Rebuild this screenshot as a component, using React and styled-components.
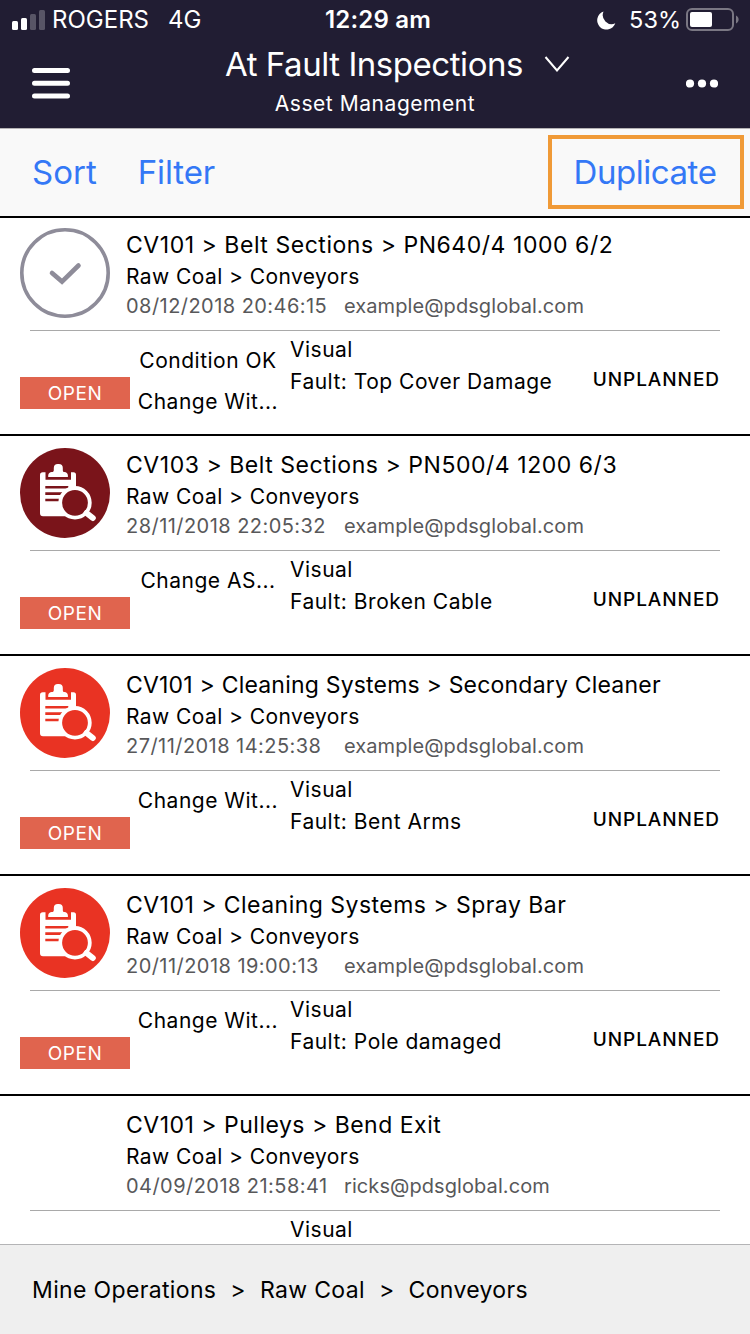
import React from "react";
import styled, { createGlobalStyle } from "styled-components";

const inspections = [
  {
    icon: "check",
    asset: "CV101 > Belt Sections > PN640/4 1000 6/2",
    date: "08/12/2018 20:46:15",
    email: "example@pdsglobal.com",
    actions: ["Condition OK", "Change Wit..."],
    fault: "Top Cover Damage",
  },
  {
    icon: "inspect",
    color: "#7a141a",
    asset: "CV103 > Belt Sections > PN500/4 1200 6/3",
    date: "28/11/2018 22:05:32",
    email: "example@pdsglobal.com",
    actions: ["Change AS..."],
    fault: "Broken Cable",
  },
  {
    icon: "inspect",
    color: "#e93323",
    asset: "CV101 > Cleaning Systems > Secondary Cleaner",
    tracking: "0.2px",
    date: "27/11/2018 14:25:38",
    email: "example@pdsglobal.com",
    actions: ["Change Wit..."],
    fault: "Bent Arms",
  },
  {
    icon: "inspect",
    color: "#e93323",
    asset: "CV101 > Cleaning Systems > Spray Bar",
    tracking: "0.47px",
    date: "20/11/2018 19:00:13",
    email: "example@pdsglobal.com",
    actions: ["Change Wit..."],
    fault: "Pole damaged",
  },
  {
    asset: "CV101 > Pulleys > Bend Exit",
    tracking: "0.5px",
    date: "04/09/2018 21:58:41",
    email: "ricks@pdsglobal.com",
    actions: [],
  },
];

const CheckIcon = () => (
  <svg width="90" height="90" viewBox="0 0 90 90" fill="none" stroke="#8e8c99">
    <circle cx="45" cy="45" r="43.2" strokeWidth="3.6" />
    <path d="M32 45l10 8.600L58.500 37.500" strokeWidth="4.600" strokeLinecap="round" />
  </svg>
);

const InspectIcon = ({ color }) => (
  <svg width="90" height="90" viewBox="0 0 90 90">
    <circle cx="45" cy="45" r="45" fill={color} />
    <path
      d="M22.800 24.200H25.500v7.600h25.500v-7.600h2.500a2.500 2.500 0 0 1 2.500 2.500V68.300H23a3 3 0 0 1-3-3V27a2.800 2.800 0 0 1 2.800-2.800z"
      fill="#fff"
    />
    <path
      d="M28.200 28.900v-1.500c0-2 1.800-3 3.500-3.300 1.700-.3 2.100-1 2.100-2.200V20a4 4 0 0 1 4-4h1a4 4 0 0 1 4 4v1.900c0 1.200.400 1.900 1.700 2.200 1.700.300 3.400 1.300 3.400 3.300v1.500z"
      fill="#fff"
    />
    <path d="M25.300 39.300h23M25.300 45.600h17M25.300 52h14" stroke={color} strokeWidth="2.600" />
    <circle cx="55" cy="54.800" r="14.800" fill={color} stroke="#fff" strokeWidth="3.800" />
    <path d="M66.500 65l6.300 5" stroke="#fff" strokeWidth="6" strokeLinecap="round" />
  </svg>
);

const App = () => {
  return (
    <Screen>
      <GlobalStyle />
      <Header>
        <StatusBar>
          <Carrier>
            <Signal viewBox="0 0 33 20">
              <rect y="11" width="6" height="9" rx="1.500" />
              <rect x="9" y="8" width="6" height="12" rx="1.500" />
              <rect x="18" y="4" width="6" height="16" rx="1.500" opacity="0.25" />
              <rect x="27" width="6" height="20" rx="1.500" opacity="0.25" />
            </Signal>
            <span>ROGERS</span>
            <span>4G</span>
          </Carrier>
          <Clock>12:29 am</Clock>
          <Power>
            <svg width="19" height="19" viewBox="0 0 19 19">
              <path d="M6.500 0.500A9.300 9.300 0 1 0 18.300 12.300A9 9 0 0 1 6.500 0.500z" fill="#fff" />
            </svg>
            <span>53%</span>
            <svg width="54" height="24" viewBox="0 0 54 24">
              <rect x="1" y="1" width="46" height="21" rx="5" fill="none" stroke="#7a7783" strokeWidth="2" />
              <rect x="4" y="4" width="22" height="15" rx="2" fill="#fff" />
              <path d="M50 7.500c3.500 1.500 3.500 6.500 0 8z" fill="#7a7783" />
            </svg>
          </Power>
        </StatusBar>
        <NavBar>
          <svg width="38" height="31" viewBox="0 0 38 31" stroke="#fff" strokeWidth="5" strokeLinecap="round">
            <path d="M2.500 2.500h33M2.500 15.300h33M2.500 28h33" />
          </svg>
          <Heading>
            <Title>
              <h1>At Fault Inspections</h1>
              <svg width="26" height="16" viewBox="0 0 26 16" fill="none" stroke="#fff" strokeWidth="2">
                <path d="M1.500 1l11.500 13.500L24.500 1" />
              </svg>
            </Title>
            <h2>Asset Management</h2>
          </Heading>
          <svg width="32" height="9" viewBox="0 0 32 9" fill="#fff">
            <circle cx="4" cy="4.500" r="4.100" />
            <circle cx="16" cy="4.500" r="4.100" />
            <circle cx="28" cy="4.500" r="4.100" />
          </svg>
        </NavBar>
      </Header>
      <Toolbar>
        <ToolButton>Sort</ToolButton>
        <ToolButton $tracking="-0.1px">Filter</ToolButton>
        <ToolButton $highlight $tracking="-0.45px">Duplicate</ToolButton>
      </Toolbar>
      <List>
        {inspections.map((item) => (
          <Inspection key={item.date}>
            <Summary>
              <Avatar>
                {item.icon === "check" && <CheckIcon />}
                {item.icon === "inspect" && <InspectIcon color={item.color} />}
              </Avatar>
              <div>
                <Asset $tracking={item.tracking}>{item.asset}</Asset>
                <Location>Raw Coal &gt; Conveyors</Location>
                <Meta>
                  <span>{item.date}</span>
                  <Email>{item.email}</Email>
                </Meta>
              </div>
            </Summary>
            <Details>
              {item.fault && <Badge>OPEN</Badge>}
              <Actions>
                {item.actions.map((action) => (
                  <p key={action}>{action}</p>
                ))}
              </Actions>
              <Fault>
                <p>Visual</p>
                {item.fault && <p>Fault: {item.fault}</p>}
              </Fault>
              {item.fault && <Planned>UNPLANNED</Planned>}
            </Details>
          </Inspection>
        ))}
      </List>
      <Breadcrumb>
        <span>Mine Operations</span>
        <span>&gt;</span>
        <span>Raw Coal</span>
        <span>&gt;</span>
        <span>Conveyors</span>
      </Breadcrumb>
    </Screen>
  );
};

const GlobalStyle = createGlobalStyle`
*{
    box-sizing: border-box;
    margin: 0;
    padding: 0;
}
body{
    font-family: Inter, "Liberation Sans", sans-serif;
    color: #000;
    background: #fff;
}
svg{
    display: block;
    flex-shrink: 0;
}
`

const Screen = styled.div`
width: 750px;
height: 1334px;
display: flex;
flex-direction: column;
overflow: hidden;
white-space: nowrap;
`
const Header = styled.header`
height: 128px;
background: #211d33;
color: #fff;
`
const StatusBar = styled.div`
height: 40px;
display: grid;
grid-template-columns: 1fr auto 1fr;
align-items: center;
padding: 0 12px;
font-size: 24px;
line-height: 40px;
`
const Carrier = styled.div`
display: flex;
align-items: center;
span{
    margin-left: 7px;
}
span + span{
    margin-left: 19px;
}
`
const Signal = styled.svg`
width: 33px;
height: 20px;
fill: #fff;
`
const Clock = styled.div`
font-weight: 600;
letter-spacing: 0.2px;
padding: 0 0 0 6px;
`
const Power = styled.div`
display: flex;
align-items: center;
justify-content: flex-end;
margin-right: -2px;
span{
    font-size: 23.5px;
    margin: 0 5px 0 13px;
}
`
const NavBar = styled.div`
height: 86px;
display: flex;
align-items: center;
justify-content: space-between;
padding: 0 32px;
`
const Heading = styled.div`
text-align: center;
padding: 0 0 10px 39px;
h2{
    font-size: 21px;
    font-weight: 400;
    line-height: 28px;
    letter-spacing: 0.55px;
    margin-right: 45px;
}
`
const Title = styled.div`
display: flex;
align-items: center;
gap: 21px;
h1{
    font-size: 33px;
    font-weight: 400;
    line-height: 52px;
    letter-spacing: -0.45px;
}
`
const Toolbar = styled.nav`
height: 88px;
display: flex;
align-items: center;
padding: 0 6px 2px 32px;
background: #f9f9f9;
border-top: 1px solid #b4b2b4;
`
const ToolButton = styled.button`
font: inherit;
font-size: 33px;
line-height: 40px;
letter-spacing: ${(props) => props.$tracking || "0"};
color: #3478f6;
background: none;
border: ${(props) => (props.$highlight ? "4px solid #f09a37" : "none")};
width: ${(props) => (props.$highlight ? "196px" : "auto")};
height: ${(props) => (props.$highlight ? "74px" : "auto")};
padding-right: ${(props) => (props.$highlight ? "2px" : "0")};
margin-left: ${(props) => (props.$highlight ? "auto" : "0")};
margin-right: 41px;
&:last-child{
    margin-right: 0;
}
`
const List = styled.main`
flex: 1;
min-height: 0;
overflow: hidden;
`
const Summary = styled.div`
height: 114px;
display: flex;
gap: 16px;
padding: 12px 20px 0;
`
const Inspection = styled.article`
height: 220px;
border-top: 2px solid #000;
&:first-child{
    height: 218px;
}
&:first-child ${Summary}{
    height: 112px;
    padding-top: 10px;
}
`
const Avatar = styled.div`
width: 90px;
height: 90px;
`
const Asset = styled.h3`
font-size: 23px;
font-weight: 400;
line-height: 34px;
letter-spacing: ${(props) => props.$tracking || "0.54px"};
`
const Location = styled.p`
font-size: 21px;
line-height: 30px;
letter-spacing: 0.42px;
`
const Meta = styled.div`
display: grid;
grid-template-columns: 218px auto;
font-size: 20px;
line-height: 28px;
letter-spacing: 0.45px;
color: #58585a;
`
const Email = styled.span`
letter-spacing: 0.08px;
`
const Details = styled.div`
height: 104px;
display: grid;
grid-template-columns: 110px 156px 1fr auto;
margin-left: 20px;
margin-right: 30px;
position: relative;
font-size: 21px;
letter-spacing: 0.5px;
&::before{
    content: "";
    position: absolute;
    top: 0;
    left: 10px;
    right: 0;
    height: 1px;
    background: #a9a9a9;
}
`
const Badge = styled.div`
height: 32px;
margin-top: 47px;
padding-top: 1px;
background: #e0644e;
color: #fff;
font-size: 19px;
line-height: 32px;
text-align: center;
`
const Actions = styled.div`
grid-column: 2;
padding-top: 10px;
text-align: center;
line-height: 41px;
`
const Fault = styled.div`
grid-column: 3;
padding: 4px 0 0 4px;
line-height: 32px;
`
const Planned = styled.div`
font-size: 19px;
font-weight: 500;
line-height: 30px;
letter-spacing: 0.95px;
margin-top: 35px;
`
const Breadcrumb = styled.footer`
height: 90px;
display: flex;
align-items: center;
gap: 14px;
padding: 1px 32px 0;
background: #efefef;
border-top: 1px solid #b4b4b6;
font-size: 23px;
letter-spacing: 0.35px;
`

export default App;
